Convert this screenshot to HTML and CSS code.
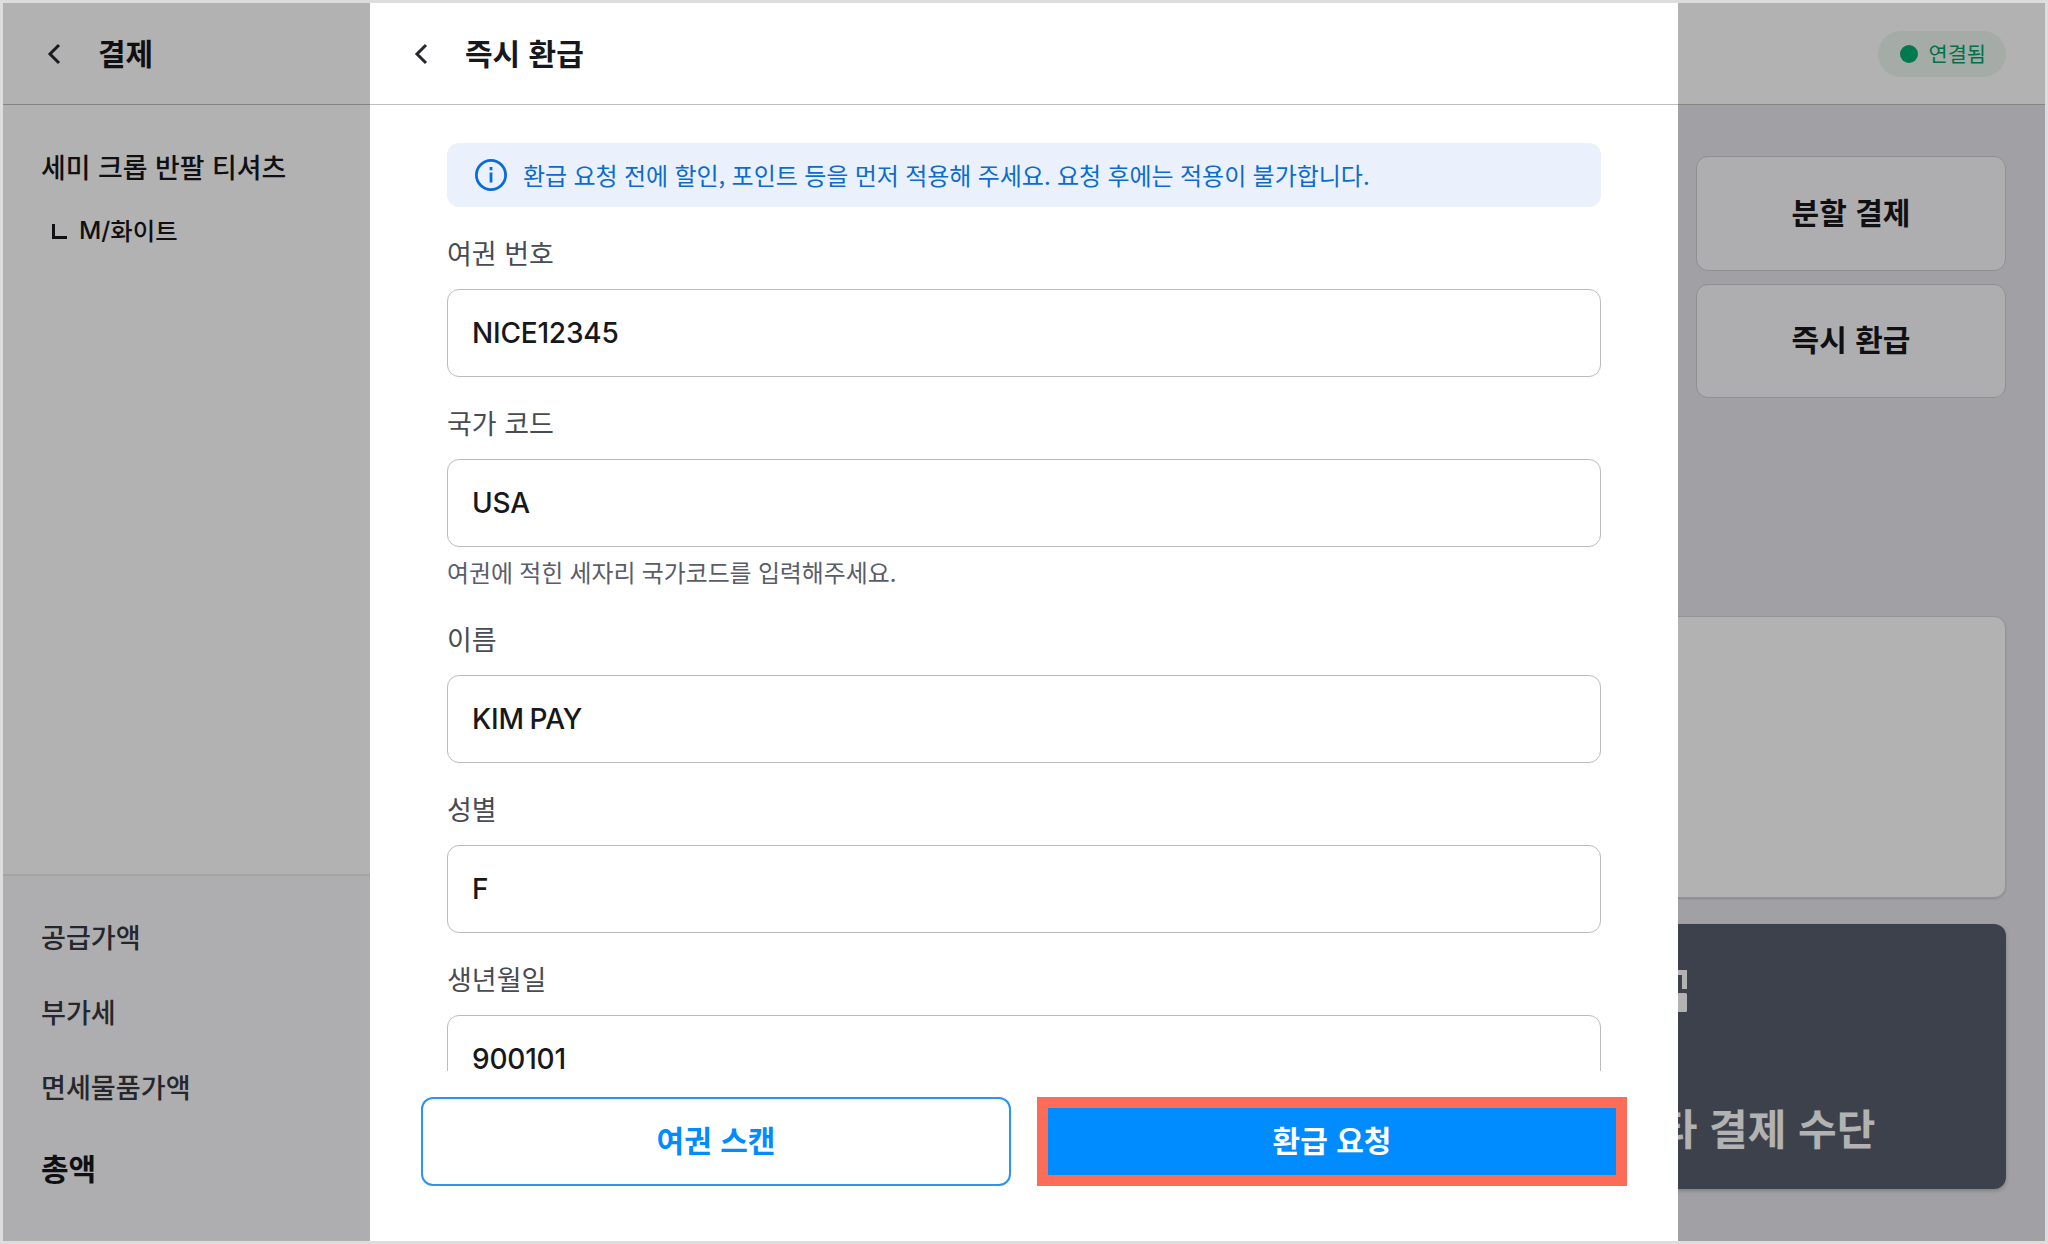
FILE: index.html
```
<!DOCTYPE html>
<html lang="ko">
<head>
  <meta charset="UTF-8">
  <title>즉시 환급</title>
  <link rel="stylesheet" href="styles.css">
</head>
<body>
  <div class="app">
    <aside class="order">
      <header class="bar">
        <svg class="back" viewBox="0 0 14 22"><path d="M12 2 3 11l9 9"/></svg>
        <h1>결제</h1>
      </header>
      <div class="items">
        <p class="item">세미 크롭 반팔 티셔츠</p>
        <p class="option"><span class="corner"></span><span class="latin">M/</span>화이트</p>
      </div>
      <div class="totals">
        <p>공급가액</p>
        <p>부가세</p>
        <p>면세물품가액</p>
        <p class="sum">총액</p>
      </div>
    </aside>
    <main class="pay">
      <header class="bar bar-end">
        <span class="status"><span class="dot"></span>연결됨</span>
      </header>
      <div class="pay-body">
        <div class="side-btns">
          <button class="side-btn">분할 결제</button>
          <button class="side-btn">즉시 환급</button>
        </div>
        <div class="panel"></div>
        <div class="methods">
          <div class="method">
            <svg class="scan-icon" viewBox="0 0 42 42">
              <path d="M2.5 19V2.5H19M23 2.5h16.5V19M2.5 23v16.5H19"/>
              <rect class="fill" x="23" y="23" width="19" height="19" rx="1.5"/>
            </svg>
            <span>기타 결제 수단</span>
          </div>
        </div>
      </div>
    </main>

    <div class="dim"></div>

    <section class="modal">
      <header class="bar">
        <svg class="back" viewBox="0 0 14 22"><path d="M12 2 3 11l9 9"/></svg>
        <h1>즉시 환급</h1>
      </header>
      <div class="form">
        <div class="notice">
          <svg class="info" viewBox="0 0 32 32">
            <circle cx="16" cy="16" r="14.6"/>
            <path d="M16 13.5v10M16 8v3.2"/>
          </svg>
          <p>환급 요청 전에 할인, 포인트 등을 먼저 적용해 주세요. 요청 후에는 적용이 불가합니다.</p>
        </div>
        <div class="field">
          <label for="passport">여권 번호</label>
          <input type="text" id="passport" value="NICE12345">
        </div>
        <div class="field">
          <label for="country">국가 코드</label>
          <input type="text" id="country" value="USA">
          <p class="help">여권에 적힌 세자리 국가코드를 입력해주세요.</p>
        </div>
        <div class="field">
          <label for="name">이름</label>
          <input type="text" id="name" value="KIM PAY">
        </div>
        <div class="field">
          <label for="sex">성별</label>
          <input type="text" id="sex" value="F">
        </div>
        <div class="field">
          <label for="birth">생년월일</label>
          <input type="text" id="birth" value="900101">
        </div>
      </div>
      <footer class="actions">
        <button class="btn btn-line">여권 스캔</button>
        <button class="btn btn-main">환급 요청</button>
      </footer>
    </section>
  </div>
</body>
</html>
```
FILE: styles.css
```
* {
  box-sizing: border-box;
}
body {
  margin: 0;
  font-family: "Noto Sans CJK KR", sans-serif;
  color: #17181b;
}
h1, p {
  margin: 0;
}
button, input {
  font-family: inherit;
  color: inherit;
}
.latin {
  font-family: Inter, sans-serif;
}

.app {
  position: relative;
  display: flex;
  width: 2048px;
  height: 1244px;
  border: 3px solid #ddd;
  overflow: hidden;
}

/* top bars */
.bar {
  flex: none;
  display: flex;
  align-items: center;
  gap: 37px;
  height: 102px;
  padding-left: 44px;
  border-bottom: 1px solid #bfbfbf;
  background: #fff;
}
.bar h1 {
  padding-bottom: 3px;
  font-size: 30px;
  font-weight: 700;
  line-height: 40px;
}
.back {
  width: 14px;
  height: 22px;
  fill: none;
  stroke: #26282c;
  stroke-width: 3;
}

/* order list */
.order {
  display: flex;
  flex-direction: column;
  width: 657px;
  background: #fff;
}
.items {
  flex: 1;
  padding: 42px 38px 0;
}
.item {
  font-size: 26.9px;
  font-weight: 500;
  line-height: 40px;
}
.option {
  display: flex;
  align-items: center;
  margin-top: 23px;
  padding-left: 11px;
  font-size: 24.4px;
  font-weight: 500;
  line-height: 40px;
}
.corner {
  width: 15px;
  height: 15px;
  margin: 2px 12px 0 0;
  border-left: 3px solid #17181b;
  border-bottom: 3px solid #17181b;
}
.totals {
  height: 367px;
  padding: 41px 38px 0;
  border-top: 2px solid #ebebed;
  background: #fafafc;
  color: #35383f;
}
.totals p {
  margin-bottom: 35px;
  font-size: 27.1px;
  font-weight: 500;
  line-height: 40px;
}
.totals .sum {
  margin-top: 40px;
  color: #17181b;
  font-size: 30px;
  font-weight: 700;
}

/* payment area */
.pay {
  flex: 1;
  display: flex;
  flex-direction: column;
  background: #e7e6ec;
}
.bar-end {
  justify-content: flex-end;
  padding-right: 39px;
}
.status {
  display: flex;
  align-items: center;
  gap: 11px;
  height: 46px;
  padding: 0 20px 0 22px;
  border-radius: 23px;
  background: #edf5f0;
  color: #00a468;
  font-size: 20.8px;
  line-height: 43px;
}
.dot {
  width: 18px;
  height: 18px;
  border-radius: 50%;
  background: #00ae6e;
}
.pay-body {
  flex: 1;
  display: flex;
  flex-direction: column;
  padding: 51px 39px 52px;
}
.side-btns {
  display: flex;
  flex-direction: column;
  align-items: flex-end;
  gap: 13px;
}
.side-btn {
  width: 310px;
  height: 114.5px;
  padding: 0 0 5px;
  border: 1px solid #cdcdd1;
  border-radius: 12px;
  background: #fafafc;
  font-size: 30px;
  font-weight: 700;
}
.panel {
  height: 282px;
  margin-top: 218px;
  border: 1px solid #d3d3d7;
  border-radius: 12px;
  background: #fff;
  box-shadow: 0 1px 2px rgba(0, 0, 0, .15);
}
.methods {
  display: flex;
  justify-content: flex-end;
  margin-top: 26px;
}
.method {
  display: flex;
  flex-direction: column;
  justify-content: space-between;
  width: 517px;
  height: 265px;
  padding: 46px 0 32px 131px;
  border-radius: 12px;
  background: #575e6e;
  box-shadow: 0 2px 4px rgba(0, 0, 0, .2);
  color: #fff;
  font-size: 42px;
  font-weight: 700;
  line-height: 60px;
}
.scan-icon {
  width: 42px;
  height: 42px;
  margin-left: 25px;
  fill: none;
  stroke: #fff;
  stroke-width: 5;
}
.scan-icon .fill {
  fill: #fff;
  stroke: none;
}

.dim {
  position: absolute;
  inset: 0;
  background: rgba(0, 0, 0, .3);
}

/* refund modal */
.modal {
  position: absolute;
  top: 0;
  bottom: 0;
  left: 367px;
  width: 1308px;
  display: flex;
  flex-direction: column;
  background: #fff;
}
.form {
  flex: 1;
  min-height: 0;
  padding: 38px 77px 0;
  overflow: hidden;
}
.notice {
  display: flex;
  align-items: center;
  gap: 16px;
  height: 64px;
  margin-bottom: 26px;
  padding-left: 28px;
  border-radius: 12px;
  background: #eaf1fc;
  color: #0c6bd0;
  font-size: 24px;
  word-spacing: -.4px;
}
.notice p {
  padding-bottom: 2px;
}
.info {
  width: 32px;
  height: 32px;
  fill: none;
  stroke: #0c6bd8;
  stroke-width: 2.8;
}
.field {
  margin-bottom: 26.3px;
}
.field label {
  display: block;
  height: 56px;
  color: #484b52;
  font-size: 27px;
  line-height: 39px;
}
.field input {
  display: block;
  width: 100%;
  height: 88px;
  padding: 0 24px;
  border: 1px solid #bcbcbe;
  border-radius: 12px;
  background: #fff;
  font: 500 28px Inter, sans-serif;
  letter-spacing: -.2px;
  word-spacing: -1.5px;
}
.help {
  height: 45px;
  padding-top: 7px;
  color: #5a5d68;
  font-size: 23.9px;
  line-height: 36px;
  word-spacing: -.4px;
}
.actions {
  display: grid;
  grid-template-columns: 1fr 1fr;
  gap: 26px;
  height: 170px;
  padding: 26px 51px 55px;
}
.btn {
  padding: 0 0 5px;
  border-radius: 12px;
  font-size: 30px;
  font-weight: 700;
}
.btn-line {
  border: 2px solid #2d93f0;
  background: #fff;
  color: #008cff;
}
.btn-main {
  border: 11px solid #fb6c59;
  border-radius: 0;
  background: #008cff;
  color: #fff;
}
```
